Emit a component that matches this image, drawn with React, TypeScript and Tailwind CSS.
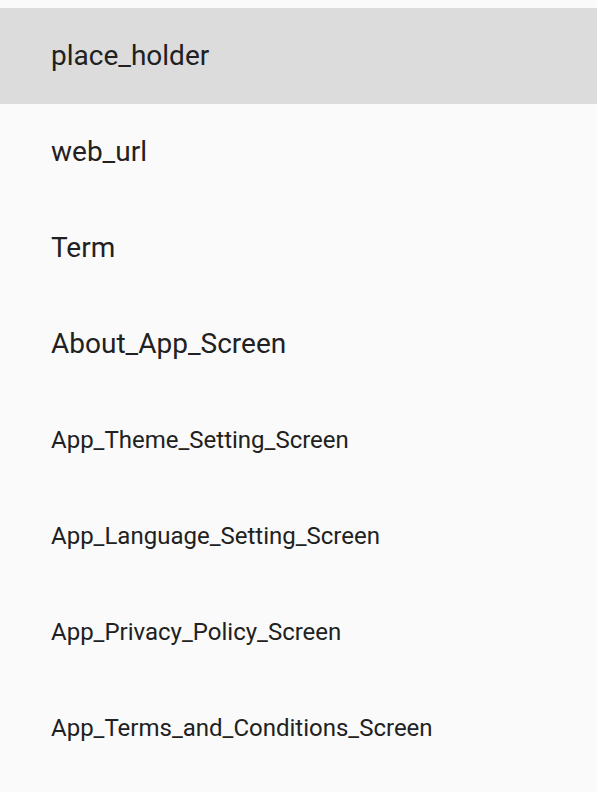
const items: { label: string; big: boolean }[] = [
  { label: 'place_holder', big: true },
  { label: 'web_url', big: true },
  { label: 'Term', big: true },
  { label: 'About_App_Screen', big: true },
  { label: 'App_Theme_Setting_Screen', big: false },
  { label: 'App_Language_Setting_Screen', big: false },
  { label: 'App_Privacy_Policy_Screen', big: false },
  { label: 'App_Terms_and_Conditions_Screen', big: false },
];

export default function App() {
  return (
    <main className="h-[792px] w-[597px] overflow-hidden bg-[#fafafa] pt-2 text-[#212121] font-['Roboto',sans-serif]">
      <ul>
        {items.map((item, i) => (
          <li
            key={item.label}
            className={
              'flex h-24 items-center pl-[51px] ' + (i === 0 ? 'bg-[#dcdcdc]' : '')
            }
          >
            <span className={item.big ? 'text-[28px]' : 'text-[24px]'}>{item.label}</span>
          </li>
        ))}
      </ul>
    </main>
  );
}
